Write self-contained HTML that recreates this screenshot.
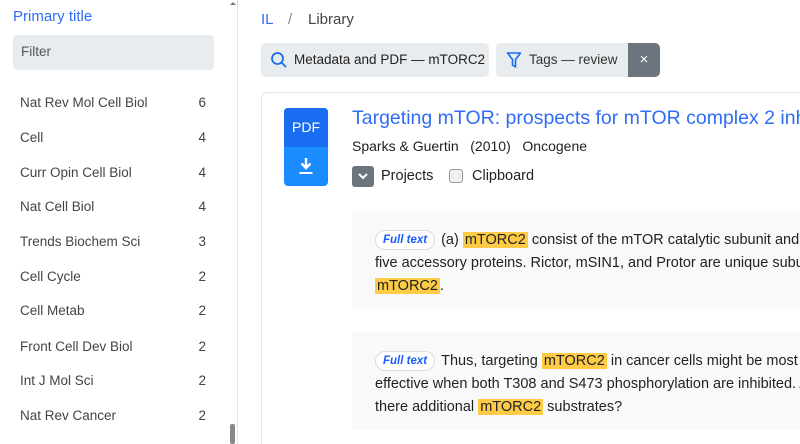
<!DOCTYPE html>
<html><head><meta charset="utf-8"><style>
*{box-sizing:border-box;margin:0;padding:0}
html,body{width:800px;height:444px;overflow:hidden}
body{background:#fff;font-family:"Liberation Sans",sans-serif;color:#222;position:relative}
#w{position:absolute;left:0;top:0;width:800px;height:444px;overflow:hidden}
.a{position:absolute;white-space:nowrap}
.side{position:absolute;left:0;top:0;width:238px;height:444px;border-right:1px solid #e3e3e3}
.row{position:absolute;left:20px;width:186px;font-size:13.5px;color:#444}
.row span{position:absolute;right:0}
.hl{background:#fdcb45;padding:0 2px}
.box{position:absolute;left:352px;width:448px;background:#f8f9fa;overflow:hidden}
.box p{position:absolute;left:23px;top:18px;width:440px;font-size:14.5px;line-height:23px;color:#222;white-space:nowrap}
.badge{display:inline-block;border:1px solid #dcdcdc;border-radius:11px;padding:0 7px;font-size:11.5px;font-style:italic;font-weight:bold;color:#1a5cff;line-height:18px;background:#fff;margin-right:6px;vertical-align:1px}
</style></head><body><div id="w">
<div class="side">
<div class="a" style="left:13px;top:8px;font-size:15px;color:#2f6df6">Primary title</div>
<div class="a" style="left:13px;top:35px;width:201px;height:35px;background:#e9ecef;border-radius:4px"></div>
<div class="a" style="left:21px;top:44px;font-size:13.5px;color:#555">Filter</div>
<div class="row" style="top:95px">Nat Rev Mol Cell Biol<span>6</span></div>
<div class="row" style="top:130px">Cell<span>4</span></div>
<div class="row" style="top:165px">Curr Opin Cell Biol<span>4</span></div>
<div class="row" style="top:199px">Nat Cell Biol<span>4</span></div>
<div class="row" style="top:234px">Trends Biochem Sci<span>3</span></div>
<div class="row" style="top:269px">Cell Cycle<span>2</span></div>
<div class="row" style="top:303px">Cell Metab<span>2</span></div>
<div class="row" style="top:339px">Front Cell Dev Biol<span>2</span></div>
<div class="row" style="top:373px">Int J Mol Sci<span>2</span></div>
<div class="row" style="top:408px">Nat Rev Cancer<span>2</span></div>
<div class="a" style="left:230px;top:424px;width:5px;height:20px;background:#888;border-radius:2px"></div>
<div class="a" style="left:230px;top:2px;width:0;height:0;border-left:3px solid transparent;border-right:3px solid transparent;border-bottom:3px solid #777"></div>
</div>
<div class="a" style="left:261px;top:11px;font-size:15px;color:#2f6df6">IL</div>
<div class="a" style="left:288px;top:11px;font-size:15px;color:#888">/</div>
<div class="a" style="left:308px;top:11px;font-size:15px;color:#444">Library</div>
<div class="a" style="left:261px;top:43px;width:228px;height:34px;background:#e9ecef;border-radius:5px"></div>
<svg class="a" style="left:270px;top:51px" width="18" height="18" viewBox="0 0 18 18"><circle cx="7.5" cy="7.5" r="5.5" fill="none" stroke="#1a6cf0" stroke-width="1.8"/><path d="M11.5 11.5L16 16" stroke="#1a6cf0" stroke-width="1.8"/></svg>
<div class="a" style="left:294px;top:52px;font-size:13.5px;color:#222">Metadata and PDF — mTORC2</div>
<div class="a" style="left:496px;top:43px;width:164px;height:34px;background:#e9ecef;border-radius:5px;overflow:hidden"><div style="position:absolute;right:0;top:0;width:32px;height:34px;background:#6c757d;color:#fff;font-size:15px;text-align:center;line-height:34px">×</div></div>
<svg class="a" style="left:506px;top:51px" width="16" height="18" viewBox="0 0 16 18"><path d="M1.5 2H14.5L9.5 8.5V16L6.5 14V8.5Z" fill="none" stroke="#1a6cf0" stroke-width="1.6" stroke-linejoin="round"/></svg>
<div class="a" style="left:529px;top:52px;font-size:13.5px;color:#333">Tags — review</div>
<div class="a" style="left:261px;top:92px;width:560px;height:400px;border:1px solid #e3e3e3;border-radius:6px"></div>
<div class="a" style="left:284px;top:108px;width:44px;height:78px;border-radius:4px;overflow:hidden;background:#1a8cff">
<div style="height:39px;background:#1a6cf0;color:#fff;font-size:14px;text-align:center;line-height:39px">PDF</div>
<svg style="position:absolute;left:14px;top:49px" width="16" height="18" viewBox="0 0 16 18"><path d="M8 1V11M3.5 6.5L8 11L12.5 6.5" fill="none" stroke="#fff" stroke-width="2.4"/><path d="M1.5 16H14.5" stroke="#fff" stroke-width="2"/></svg>
</div>
<div class="a" style="left:352px;top:107px;font-size:19.5px;color:#2f6df6">Targeting mTOR: prospects for mTOR complex 2 inhibitors</div>
<div class="a" style="left:352px;top:138px;font-size:14px;color:#222">Sparks &amp; Guertin &nbsp; (2010) &nbsp; Oncogene</div>
<div class="a" style="left:352px;top:166px;width:22px;height:21px;background:#6c757d;border-radius:3px"><svg style="position:absolute;left:5px;top:6px" width="12" height="9" viewBox="0 0 12 9"><path d="M2 2L6 6L10 2" fill="none" stroke="#fff" stroke-width="2"/></svg></div>
<div class="a" style="left:381px;top:168px;font-size:14.5px;color:#222">Projects</div>
<div class="a" style="left:449px;top:169px;width:14px;height:14px;border:1px solid #999;border-radius:3px;background:#f0f0f0"></div>
<div class="a" style="left:472px;top:168px;font-size:14.5px;color:#222">Clipboard</div>
<div class="box" style="top:211px;height:98px"><p><span class="badge">Full text</span>(a) <span class="hl">mTORC2</span> consist of the mTOR catalytic subunit and<br>five accessory proteins. Rictor, mSIN1, and Protor are unique subunits of<br><span class="hl">mTORC2</span>.</p></div>
<div class="box" style="top:332px;height:98px"><p><span class="badge">Full text</span>Thus, targeting <span class="hl">mTORC2</span> in cancer cells might be most<br>effective when both T308 and S473 phosphorylation are inhibited. Are<br>there additional <span class="hl">mTORC2</span> substrates?</p></div>
</div></body></html>
